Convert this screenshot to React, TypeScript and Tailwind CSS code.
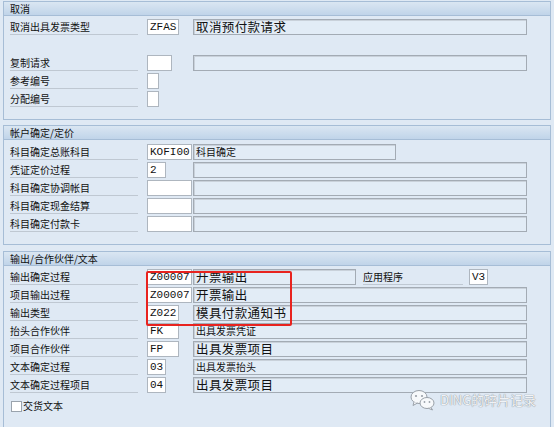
import React from "react";

const cjk = "font-['Noto_Sans_CJK_SC','Noto_Sans',sans-serif]";
const mono = "font-['Liberation_Mono','Noto_Sans_CJK_SC',monospace]";

const Group = ({
  title,
  className,
  children,
}: {
  title: string;
  className?: string;
  children: React.ReactNode;
}) => (
  <div className={`mx-[3px] border border-[#a6bdd6] ${className ?? ""}`}>
    <div className="h-[14px] bg-gradient-to-b from-[#dae6f2] to-[#c0d4e9] border-b border-[#a6bdd6] pl-[6px] text-[10px] leading-[14px] text-[#111]">
      {title}
    </div>
    {children}
  </div>
);

const Label = ({ text, w = "w-[128px]" }: { text: string; w?: string }) => (
  <div className={`${w} h-[16px] border-b border-[#bfc8d2] text-[10px] leading-[15px] text-[#111] whitespace-nowrap`}>
    {text}
  </div>
);

const Input = ({ value = "", w }: { value?: string; w: string }) => (
  <div
    className={`${w} h-[16px] bg-white border border-[#aeb6bf] pl-[2px] ${mono} text-[11px] leading-[14px] text-[#111] whitespace-nowrap`}
  >
    {value}
  </div>
);

const Display = ({
  value = "",
  w = "w-[334px]",
  big = false,
}: {
  value?: string;
  w?: string;
  big?: boolean;
}) => (
  <div
    className={`${w} h-[16px] bg-[#e2ecf6] border border-[#a3abb4] shadow-[inset_1px_1px_0_#c9d1da] pl-[2px] text-[#111] whitespace-nowrap flex items-center ${
      big ? "text-[12.5px] leading-none tracking-[0.4px]" : "text-[10px] leading-none"
    }`}
  >
    <span>{value}</span>
  </div>
);

const Row = ({
  label,
  children,
}: {
  label?: string;
  children?: React.ReactNode;
}) => (
  <div className="flex items-start h-[16px]">
    <div className="w-[137px] shrink-0">{label ? <Label text={label} /> : null}</div>
    {children}
  </div>
);

const Slot = ({ children }: { children?: React.ReactNode }) => (
  <div className="w-[46px] shrink-0">{children}</div>
);

export default function App() {
  return (
    <div className={`relative w-[554px] h-[427px] overflow-hidden bg-[#dfe9f4] ${cjk} pt-[1px]`}>
      {/* 取消 */}
      <Group title="取消">
        <div className="flex flex-col gap-[2px] pl-[6px] pt-[3px] pb-[12px]">
          <Row label="取消出具发票类型">
            <Slot>
              <Input w="w-[32px]" value="ZFAS" />
            </Slot>
            <Display value="取消预付款请求" big />
          </Row>
          <Row />
          <Row label="复制请求">
            <Slot>
              <Input w="w-[25px]" />
            </Slot>
            <Display />
          </Row>
          <Row label="参考编号">
            <Slot>
              <Input w="w-[12px]" />
            </Slot>
          </Row>
          <Row label="分配编号">
            <Slot>
              <Input w="w-[12px]" />
            </Slot>
          </Row>
        </div>
      </Group>

      {/* 帐户确定/定价 */}
      <Group title="帐户确定/定价" className="mt-[5px]">
        <div className="flex flex-col gap-[2px] pl-[6px] pt-[4px] pb-[12px]">
          <Row label="科目确定总账科目">
            <Slot>
              <Input w="w-[45px]" value="KOFI00" />
            </Slot>
            <Display w="w-[203px]" value="科目确定" />
          </Row>
          <Row label="凭证定价过程">
            <Slot>
              <Input w="w-[19px]" value="2" />
            </Slot>
            <Display />
          </Row>
          <Row label="科目确定协调帐目">
            <Slot>
              <Input w="w-[45px]" />
            </Slot>
            <Display />
          </Row>
          <Row label="科目确定现金结算">
            <Slot>
              <Input w="w-[45px]" />
            </Slot>
            <Display />
          </Row>
          <Row label="科目确定付款卡">
            <Slot>
              <Input w="w-[45px]" />
            </Slot>
            <Display />
          </Row>
        </div>
      </Group>

      {/* 输出/合作伙伴/文本 */}
      <Group title="输出/合作伙伴/文本" className="mt-[6px] h-[200px]">
        <div className="flex flex-col gap-[2px] pl-[6px] pt-[3px]">
          <Row label="输出确定过程">
            <Slot>
              <Input w="w-[45px]" value="Z00007" />
            </Slot>
            <Display w="w-[163px]" value="开票输出" big />
            <div className="ml-[7px]">
              <Label text="应用程序" w="w-[100px]" />
            </div>
            <div className="ml-[6px]">
              <Input w="w-[19px]" value="V3" />
            </div>
          </Row>
          <Row label="项目输出过程">
            <Slot>
              <Input w="w-[45px]" value="Z00007" />
            </Slot>
            <Display value="开票输出" big />
          </Row>
          <Row label="输出类型">
            <Slot>
              <Input w="w-[32px]" value="Z022" />
            </Slot>
            <Display value="模具付款通知书" big />
          </Row>
          <Row label="抬头合作伙伴">
            <Slot>
              <Input w="w-[32px]" value="FK" />
            </Slot>
            <Display value="出具发票凭证" />
          </Row>
          <Row label="项目合作伙伴">
            <Slot>
              <Input w="w-[32px]" value="FP" />
            </Slot>
            <Display value="出具发票项目" big />
          </Row>
          <Row label="文本确定过程">
            <Slot>
              <Input w="w-[19px]" value="03" />
            </Slot>
            <Display value="出具发票抬头" />
          </Row>
          <Row label="文本确定过程项目">
            <Slot>
              <Input w="w-[19px]" value="04" />
            </Slot>
            <Display value="出具发票项目" big />
          </Row>
          <div className="flex items-center h-[16px] pl-[1px] mt-[3px]">
            <div className="w-[11px] h-[11px] bg-white border border-[#9aa3ad]" />
            <span className="ml-[1px] text-[10px] leading-[12px] text-[#111]">交货文本</span>
          </div>
        </div>
      </Group>

      {/* red highlight */}
      <div className="absolute left-[146px] top-[271px] w-[146px] h-[55px] border-2 border-[#e8231f] rounded-[2px]" />

      {/* watermark */}
      <div className="absolute left-[410px] top-[389px] flex items-center gap-[4px]">
        <svg width="26" height="22" viewBox="0 0 26 22">
          <ellipse cx="9" cy="8" rx="8" ry="6.5" fill="#f7f9fb" stroke="#9aa1a9" strokeWidth="1" />
          <path d="M4 13 L3 16.5 L7.5 14" fill="#f7f9fb" stroke="#9aa1a9" strokeWidth="1" />
          <circle cx="6" cy="7" r="1.1" fill="#9aa1a9" />
          <circle cx="12" cy="7" r="1.1" fill="#9aa1a9" />
          <ellipse cx="17" cy="14" rx="7" ry="5.5" fill="#f7f9fb" stroke="#9aa1a9" strokeWidth="1" />
          <path d="M21 18.5 L22.5 21 L18.5 19.3" fill="#f7f9fb" stroke="#9aa1a9" strokeWidth="1" />
          <circle cx="14.5" cy="13" r="0.9" fill="#9aa1a9" />
          <circle cx="19.5" cy="13" r="0.9" fill="#9aa1a9" />
        </svg>
        <span className="text-[13px] leading-[18px] text-[#f0f2f5] [text-shadow:0_0_1px_#8c949c,0_0_1px_#8c949c]">
          DING的碎片记录
        </span>
      </div>
    </div>
  );
}
